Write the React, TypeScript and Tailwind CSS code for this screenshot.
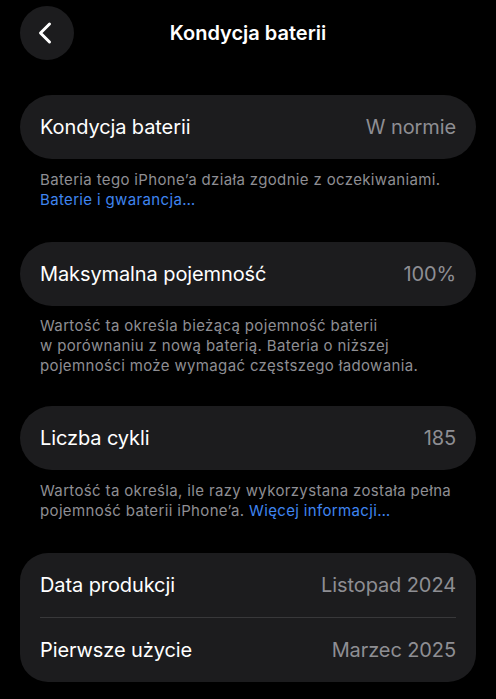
import { ChevronLeft } from 'lucide-react'

function Row({ label, value }: { label: string; value: string }) {
  return (
    <div className="flex h-16 items-center justify-between px-5">
      <span className="text-[20px] tracking-[-0.1px] text-white">{label}</span>
      <span className="text-[20px] tracking-[-0.1px] text-[#8e8e93]">{value}</span>
    </div>
  )
}

function Note({ children }: { children: React.ReactNode }) {
  return <p className="px-5 text-[15px] leading-5 tracking-[0.35px] text-[#8e8e93]">{children}</p>
}

export default function App() {
  return (
    <div
      className="min-h-[699px] bg-black px-5 pt-[6px] pb-5 text-white"
      style={{ fontFamily: 'Inter, "Liberation Sans", sans-serif' }}
    >
      <div className="relative flex h-[54px] items-center justify-center">
        <button className="absolute left-0 top-0 flex h-[54px] w-[54px] items-center justify-center rounded-full bg-[#1c1c1e]">
          <ChevronLeft size={36} strokeWidth={2} className="-ml-1 text-white" />
        </button>
        <h1 className="text-[20px] font-semibold">Kondycja baterii</h1>
      </div>

      <div className="mt-[35px] rounded-full bg-[#1c1c1e]">
        <Row label="Kondycja baterii" value="W normie" />
      </div>
      <div className="mt-[11px]">
        <Note>
          Bateria tego iPhone’a działa zgodnie z oczekiwaniami.
          <br />
          <span className="text-[#3f85f0]">Baterie i gwarancja…</span>
        </Note>
      </div>

      <div className="mt-[32px] rounded-full bg-[#1c1c1e]">
        <Row label="Maksymalna pojemność" value="100%" />
      </div>
      <div className="mt-[10px]">
        <Note>
          Wartość ta określa bieżącą pojemność baterii
          <br />
          w porównaniu z nową baterią. Bateria o niższej
          <br />
          pojemności może wymagać częstszego ładowania.
        </Note>
      </div>

      <div className="mt-[30px] rounded-full bg-[#1c1c1e]">
        <Row label="Liczba cykli" value="185" />
      </div>
      <div className="mt-[11px]">
        <Note>
          Wartość ta określa, ile razy wykorzystana została pełna
          <br />
          pojemność baterii iPhone’a.{' '}
          <span className="text-[#3f85f0]">Więcej informacji…</span>
        </Note>
      </div>

      <div className="mt-[32px] rounded-[28px] bg-[#1c1c1e]">
        <Row label="Data produkcji" value="Listopad 2024" />
        <div className="mx-5 h-px bg-[#38383a]" />
        <Row label="Pierwsze użycie" value="Marzec 2025" />
      </div>
    </div>
  )
}
